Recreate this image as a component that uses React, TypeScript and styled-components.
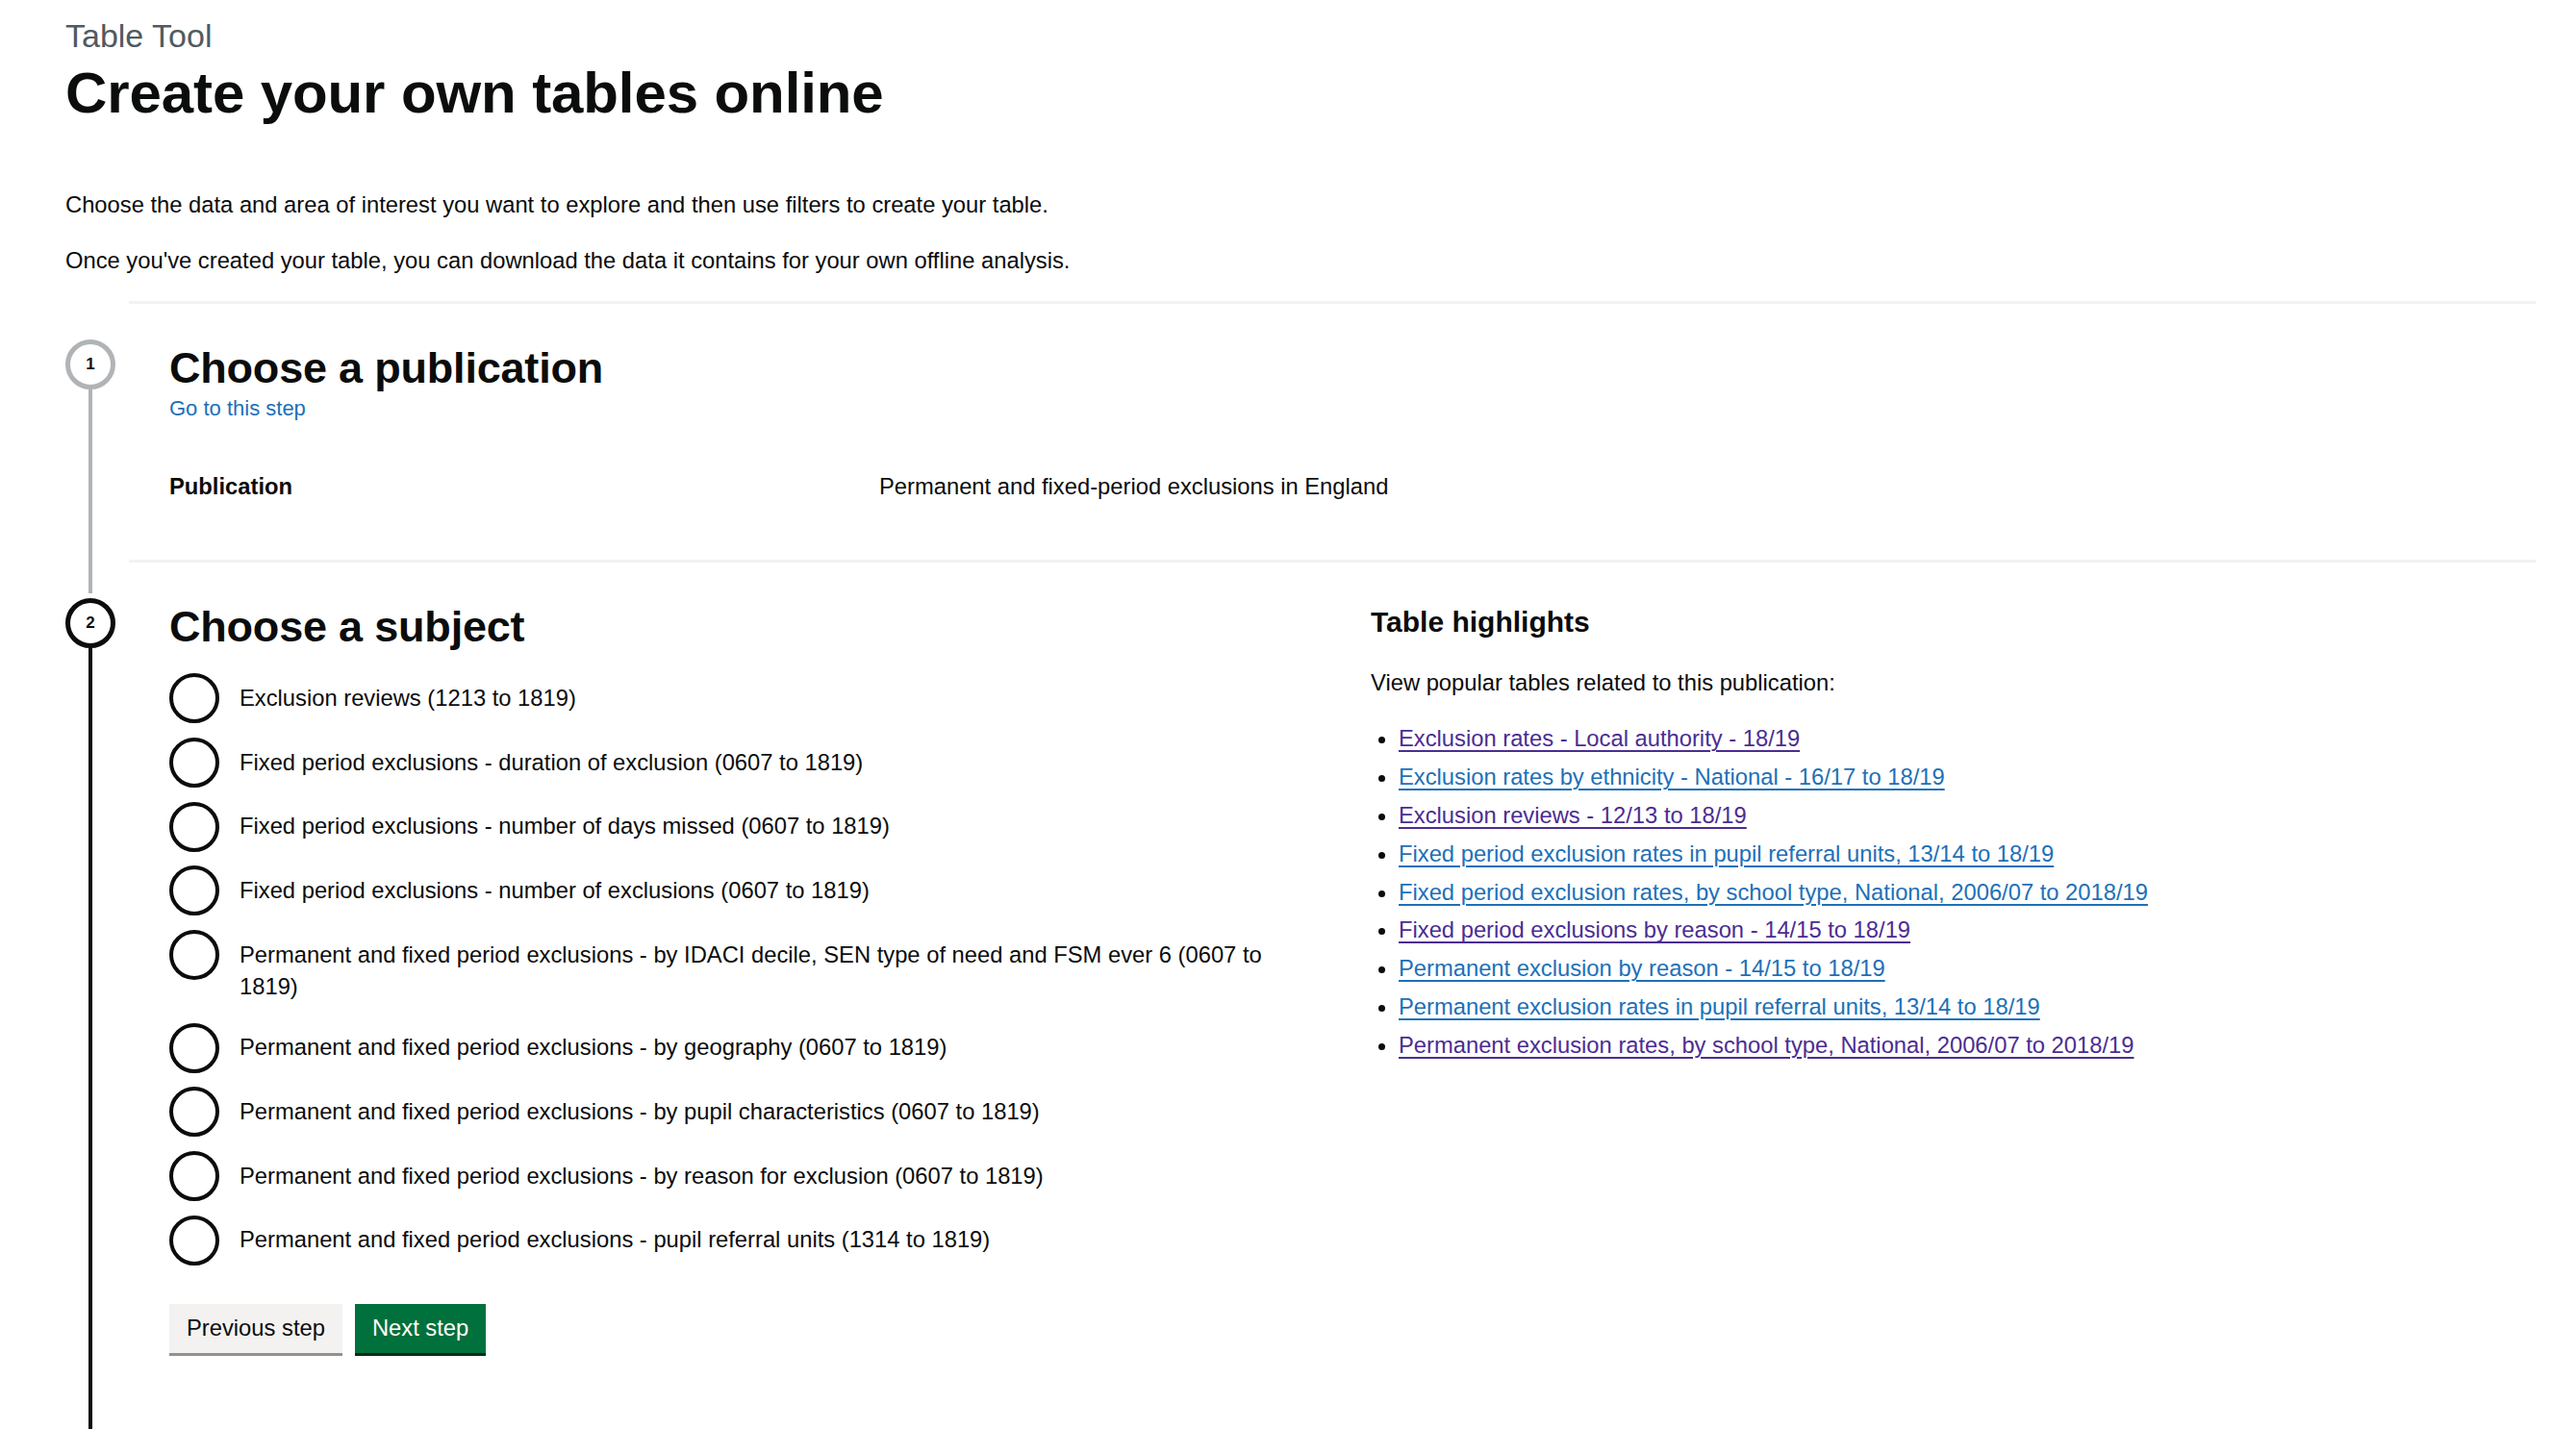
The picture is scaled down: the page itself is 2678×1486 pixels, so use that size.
import React from "react";
import styled, { createGlobalStyle } from "styled-components";

const GlobalStyle = createGlobalStyle`
  html, body {
    margin: 0;
    padding: 0;
    background: #ffffff;
  }
  body {
    font-family: "Liberation Sans", Arial, sans-serif;
    color: #0b0c0c;
    -webkit-font-smoothing: antialiased;
  }
  * { box-sizing: border-box; }
`;

const Page = styled.main`
  padding: 19px 42px 0 68px;
`;

const Caption = styled.span`
  display: block;
  font-size: 34px;
  line-height: 37px;
  color: #505a5f;
  margin: 0 0 10px;
`;

const Title = styled.h1`
  font-size: 60px;
  line-height: 62.5px;
  font-weight: 700;
  margin: 0 0 68px;
  letter-spacing: -0.1px;
`;

const Lead = styled.p`
  font-size: 23.75px;
  line-height: 31.25px;
  margin: 0 0 27px;
`;

const Steps = styled.ol`
  list-style: none;
  margin: 0;
  padding: 0;
`;

const StepRow = styled.li`
  display: flex;
  align-items: stretch;
`;

const Marker = styled.div`
  width: 52px;
  margin-right: 14px;
  display: flex;
  flex-direction: column;
  align-items: center;
  flex-shrink: 0;
`;

const TopSegment = styled.div<{ $color: string }>`
  width: 4px;
  height: 35px;
  margin-bottom: 5px;
  background: ${(p) => p.$color};
`;

const StepCircle = styled.div<{ $color: string }>`
  width: 52px;
  height: 52px;
  border: 5px solid ${(p) => p.$color};
  border-radius: 50%;
  display: flex;
  align-items: center;
  justify-content: center;
  font-size: 17px;
  font-weight: 700;
  background: #ffffff;
  color: #0b0c0c;
`;

const StepLine = styled.div<{ $color: string }>`
  width: 4px;
  flex: 1;
  background: ${(p) => p.$color};
`;

const StepBody = styled.div<{ $bottom: number }>`
  flex: 1;
  min-width: 0;
  border-top: 3px solid #f3f2f1;
  padding: 42px 0 ${(p) => p.$bottom}px 42px;
`;

const StepHeading = styled.h2`
  font-size: 45px;
  line-height: 50px;
  font-weight: 700;
  margin: 0 0 4px;
  letter-spacing: -0.2px;
`;

const StepLink = styled.a`
  display: block;
  font-size: 22px;
  line-height: 25px;
  color: #1d70b8;
  text-decoration: none;
`;

const Summary = styled.dl`
  margin: 40px 0 0;
`;

const SummaryRow = styled.div`
  display: flex;
  padding: 12.5px 0;
  font-size: 23.75px;
  line-height: 31.25px;
`;

const SummaryKey = styled.dt`
  width: 30%;
  font-weight: 700;
  margin: 0;
`;

const SummaryValue = styled.dd`
  flex: 1;
  margin: 0;
`;

const Columns = styled.div`
  display: grid;
  grid-template-columns: 1fr 1fr;
  column-gap: 38px;
`;

const Column = styled.div`
  min-width: 0;
`;

const SubjectHeading = styled(StepHeading)`
  margin-bottom: 23px;
`;

const Radios = styled.div`
  display: flex;
  flex-direction: column;
`;

const RadioItem = styled.label`
  display: flex;
  align-items: flex-start;
  margin-bottom: 14.7px;
  cursor: pointer;
`;

const RadioCircle = styled.span`
  flex-shrink: 0;
  width: 52px;
  height: 52px;
  border: 4px solid #0b0c0c;
  border-radius: 50%;
  background: #ffffff;
`;

const RadioLabel = styled.span`
  font-size: 23.75px;
  line-height: 33px;
  padding: 8.6px 19px 7.5px 21px;
`;

const ButtonGroup = styled.div`
  display: flex;
  gap: 13px;
  margin-top: 25px;
`;

const Button = styled.button<{ $primary?: boolean }>`
  height: 51px;
  padding: 0 18px;
  border: none;
  border-radius: 0;
  font-family: "Liberation Sans", Arial, sans-serif;
  font-size: 23.75px;
  line-height: 1;
  color: ${(p) => (p.$primary ? "#ffffff" : "#0b0c0c")};
  background: ${(p) => (p.$primary ? "#00703c" : "#f3f2f1")};
  box-shadow: 0 3px 0 ${(p) => (p.$primary ? "#002d18" : "#929191")};
  cursor: pointer;
`;

const HighlightsHeading = styled.h3`
  font-size: 30px;
  line-height: 31.25px;
  font-weight: 700;
  margin: 4px 0 31px;
`;

const HighlightsIntro = styled.p`
  font-size: 23.75px;
  line-height: 31.25px;
  margin: 0 0 27.5px;
`;

const BulletList = styled.ul`
  list-style: disc;
  margin: 0;
  padding-left: 29px;
`;

const BulletItem = styled.li`
  font-size: 23.75px;
  line-height: 31.25px;
  margin-bottom: 8.6px;
  color: #0b0c0c;
`;

const HighlightLink = styled.a<{ $visited?: boolean }>`
  color: ${(p) => (p.$visited ? "#4c2c92" : "#1d70b8")};
  text-decoration: underline;
  text-decoration-thickness: 1.6px;
  text-underline-offset: 0.16em;
`;

const subjects = [
  "Exclusion reviews (1213 to 1819)",
  "Fixed period exclusions - duration of exclusion (0607 to 1819)",
  "Fixed period exclusions - number of days missed (0607 to 1819)",
  "Fixed period exclusions - number of exclusions (0607 to 1819)",
  "Permanent and fixed period exclusions - by IDACI decile, SEN type of need and FSM ever 6 (0607 to 1819)",
  "Permanent and fixed period exclusions - by geography (0607 to 1819)",
  "Permanent and fixed period exclusions - by pupil characteristics (0607 to 1819)",
  "Permanent and fixed period exclusions - by reason for exclusion (0607 to 1819)",
  "Permanent and fixed period exclusions - pupil referral units (1314 to 1819)",
];

const highlights: { label: string; visited: boolean }[] = [
  { label: "Exclusion rates - Local authority - 18/19", visited: true },
  { label: "Exclusion rates by ethnicity - National - 16/17 to 18/19", visited: false },
  { label: "Exclusion reviews - 12/13 to 18/19", visited: true },
  { label: "Fixed period exclusion rates in pupil referral units, 13/14 to 18/19", visited: false },
  { label: "Fixed period exclusion rates, by school type, National, 2006/07 to 2018/19", visited: false },
  { label: "Fixed period exclusions by reason - 14/15 to 18/19", visited: true },
  { label: "Permanent exclusion by reason - 14/15 to 18/19", visited: false },
  { label: "Permanent exclusion rates in pupil referral units, 13/14 to 18/19", visited: false },
  { label: "Permanent exclusion rates, by school type, National, 2006/07 to 2018/19", visited: true },
];

export default function App() {
  return (
    <>
      <GlobalStyle />
      <Page>
        <Caption>Table Tool</Caption>
        <Title>Create your own tables online</Title>
        <Lead>
          Choose the data and area of interest you want to explore and then use filters to create
          your table.
        </Lead>
        <Lead>
          Once you've created your table, you can download the data it contains for your own
          offline analysis.
        </Lead>

        <Steps>
          <StepRow>
            <Marker>
              <TopSegment $color="transparent" />
              <StepCircle $color="#b1b4b6">1</StepCircle>
              <StepLine $color="#b1b4b6" />
            </Marker>
            <StepBody $bottom={49}>
              <StepHeading>Choose a publication</StepHeading>
              <StepLink href="#">Go to this step</StepLink>
              <Summary>
                <SummaryRow>
                  <SummaryKey>Publication</SummaryKey>
                  <SummaryValue>Permanent and fixed-period exclusions in England</SummaryValue>
                </SummaryRow>
              </Summary>
            </StepBody>
          </StepRow>

          <StepRow>
            <Marker>
              <TopSegment $color="#b1b4b6" />
              <StepCircle $color="#0b0c0c">2</StepCircle>
              <StepLine $color="#0b0c0c" />
            </Marker>
            <StepBody $bottom={120}>
              <Columns>
                <Column>
                  <SubjectHeading>Choose a subject</SubjectHeading>
                  <Radios>
                    {subjects.map((s) => (
                      <RadioItem key={s}>
                        <RadioCircle />
                        <RadioLabel>{s}</RadioLabel>
                      </RadioItem>
                    ))}
                  </Radios>
                  <ButtonGroup>
                    <Button type="button">Previous step</Button>
                    <Button type="button" $primary>
                      Next step
                    </Button>
                  </ButtonGroup>
                </Column>
                <Column>
                  <HighlightsHeading>Table highlights</HighlightsHeading>
                  <HighlightsIntro>View popular tables related to this publication:</HighlightsIntro>
                  <BulletList>
                    {highlights.map((h) => (
                      <BulletItem key={h.label}>
                        <HighlightLink href="#" $visited={h.visited}>
                          {h.label}
                        </HighlightLink>
                      </BulletItem>
                    ))}
                  </BulletList>
                </Column>
              </Columns>
            </StepBody>
          </StepRow>
        </Steps>
      </Page>
    </>
  );
}
